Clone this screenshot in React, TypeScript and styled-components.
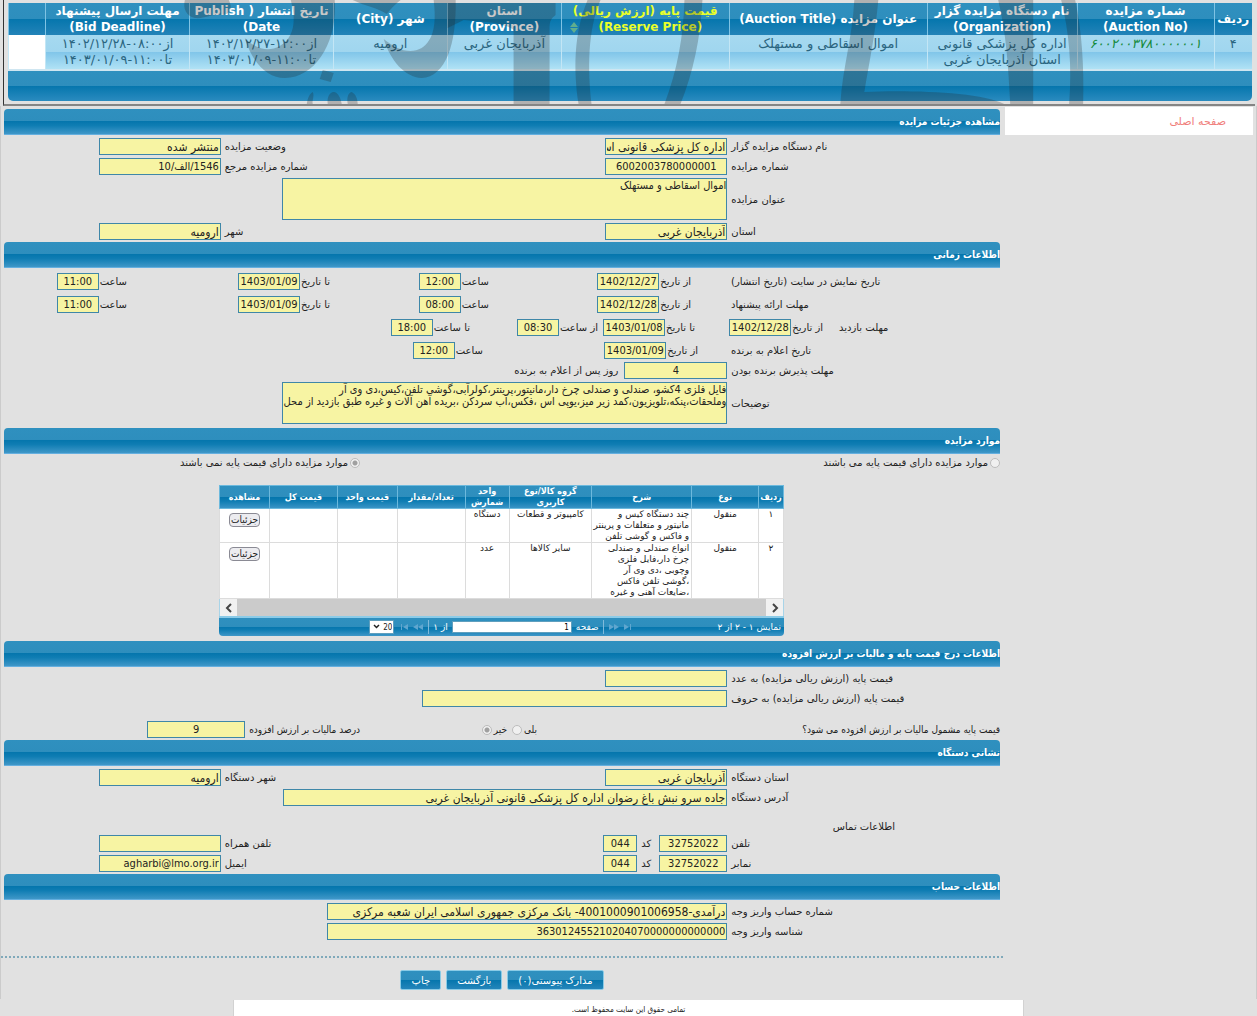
import React, { useId } from "react";
import styled, { createGlobalStyle, css } from "styled-components";

const barFill = "linear-gradient(#2f90bf 0, #2e8ebd 49%, #0576ad 50%, #0f7db3 66%, #3f97c8 100%)";
const wide = `"DejaVu Sans", sans-serif`;
const narrow = `"DejaVu Sans Condensed", "DejaVu Sans", sans-serif`;

const GlobalStyle = createGlobalStyle`
  * { box-sizing: border-box; }
  html, body { margin: 0; background: #e1e1e1; }
  input, textarea, button, select { font-family: ${narrow}; }
  body { font-family: ${wide}; font-size: 10px; line-height: 17px; color: #222; }
`;

const Page = styled.div`
  direction: rtl;
  min-height: 100vh;
  display: flex;
  flex-direction: column;
`;

/* ---------- result list at the top ---------- */

const ResultFrame = styled.header`
  position: relative;
  margin-inline: 2px 3px;
  padding: 3px 3px 3px 4px;
  border-left: 1px solid #333;
  border-bottom: 2px solid #858585;
  overflow: hidden;
`;

const ResultTable = styled.table`
  width: 100%;
  table-layout: fixed;
  border-collapse: collapse;
  line-height: 16px;
  text-align: center;
`;

const ResultHead = styled.th<{ $sorted?: boolean }>`
  height: 32px;
  padding: 0;
  font-size: 12px;
  font-weight: bold;
  color: ${(p) => (p.$sorted ? "#e9ff2a" : "#fff")};
  border-left: 1px solid #7fc3e4;
  white-space: nowrap;
`;

const ResultHeadRow = styled.tr`
  background: linear-gradient(#2f90bf 0, #2e8ebd 49%, #0576ad 50%, #2383b8 100%);
`;

const ResultCell = styled.td<{ $blank?: boolean }>`
  height: 34px;
  padding: 1px 0;
  vertical-align: top;
  font-size: 13px;
  color: #2a6580;
  white-space: nowrap;
  border-left: 1px solid #c3e6f5;
  ${(p) => p.$blank && css`background: #fff;`}
`;

const ResultRow = styled.tr`
  background: linear-gradient(#a6d9f0 0, #a0d6ef 49%, #80c5e9 50%, #b0e2f5 100%);
`;

const ResultLink = styled.a`
  color: #168a3c;
  font-style: italic;
  text-decoration: none;
`;

const SortLine = styled.span`
  display: flex;
  justify-content: center;
  align-items: center;
  gap: 20px;
  padding-inline-start: 18px;
`;

const ResultFoot = styled.div`
  height: 32px;
  border-top: 2px solid #cfe6f1;
  border-radius: 0 0 5px 5px;
  background: linear-gradient(#2f90bf 0, #2e8ebd 49%, #0576ad 50%, #2b8bbf 100%);
`;

const Watermark = styled.svg`
  position: absolute;
  inset: 0;
  width: 100%;
  height: 100%;
  pointer-events: none;
`;

/* ---------- body frame ---------- */

const Frame = styled.div`
  display: flex;
  gap: 5px;
  padding: 1px 3px 0;
  margin-bottom: 1px;
  border-inline: 1px solid #cbcbcb;
`;

const Aside = styled.aside`
  flex: 0 0 248px;
`;

const Crumb = styled.nav`
  height: 28px;
  padding: 6px 27px;
  background: #fff;
  font-size: 11px;
`;

const CrumbLink = styled.a`
  color: #f0807c;
  text-decoration: none;
`;

const Main = styled.main`
  flex: 1;
  min-width: 0;
  padding-top: 2px;
`;

const Bar = styled.h2`
  margin: 0;
  height: 26px;
  line-height: 26px;
  font-family: ${narrow};
  font-size: 10px;
  font-weight: bold;
  color: #fff;
  background: ${barFill};
  border-bottom: 1px solid #64afdf;
  border-radius: 4px 4px 0 0;
`;

const Stack = styled.div<{ $pad?: string; $gap?: number }>`
  display: flex;
  flex-direction: column;
  gap: ${(p) => p.$gap ?? 3}px;
  padding: ${(p) => p.$pad ?? "3px 0 2px"};
`;

const Row = styled.div`
  display: grid;
  grid-template-columns: 269fr 503fr 217fr;
  column-gap: 4px;
  align-items: center;
  min-height: 17px;
`;

const TimeRow = styled.div<{ $cols: string }>`
  display: grid;
  grid-template-columns: ${(p) => p.$cols};
  align-items: center;
  height: 17px;
`;

const Cell = styled.div<{ $start?: number; $gap?: number }>`
  grid-column-start: ${(p) => p.$start ?? "auto"};
  display: flex;
  align-items: center;
  gap: ${(p) => p.$gap ?? 1}px;
  min-width: 0;
`;

const Label = styled.label<{ $end?: boolean; $push?: boolean }>`
  white-space: nowrap;
  ${(p) => p.$end && css`text-align: end;`}
  ${(p) => p.$push && css`margin-inline-start: auto;`}
`;

const fieldLook = css`
  margin: 0;
  border: 1px solid #3f87a8;
  border-radius: 0;
  background: #f7f4a3;
  color: #222;
  outline: none;
`;

const Input = styled.input<{ $w: number; $center?: boolean }>`
  ${fieldLook}
  flex: none;
  width: ${(p) => p.$w}px;
  height: 17px;
  padding: 0 1px;
  font-size: ${(p) => (/^[\u0600-\u06ff]/.test(String(p.defaultValue)) ? 12 : 11)}px;
  text-align: ${(p) => (p.$center ? "center" : "start")};
`;

const Area = styled.textarea`
  ${fieldLook}
  display: block;
  width: 445px;
  height: 42px;
  padding: 1px 0;
  font-size: 11px;
  line-height: 12px;
  white-space: pre;
  resize: none;
  overflow: hidden;
`;

const RadioRow = styled.div`
  display: grid;
  grid-template-columns: 640fr 356fr;
  height: 17px;
  align-items: center;
`;

const Choice = styled.label`
  display: flex;
  align-items: center;
  gap: 2px;
  white-space: nowrap;
`;

const Choices = styled.div`
  display: flex;
  gap: 5px;
`;

const Radio = styled.input`
  appearance: none;
  width: 10px;
  height: 10px;
  margin: 0;
  border: 1px solid #bcbcbc;
  border-radius: 50%;
  background: #f0f0f0;
  &:checked {
    background: radial-gradient(circle, #a0a0a0 0 2px, #f0f0f0 3px);
  }
`;

const VatRow = styled.div`
  display: grid;
  grid-template-columns: 463fr 177fr 356fr;
  align-items: center;
  height: 17px;
  margin-top: 11px;
  font-family: ${narrow};
`;

const ContactTitle = styled.h3`
  margin: 0;
  padding-inline-start: 105px;
  height: 14px;
  line-height: 17px;
  font-size: 10px;
  font-weight: normal;
`;

/* ---------- items grid ---------- */

const GridBox = styled.section`
  width: 565px;
  margin: 14px 216px 5px auto;
`;

const ItemTable = styled.table`
  width: 100%;
  table-layout: fixed;
  border-collapse: collapse;
  background: #fff;
  text-align: center;
  font-size: 9px;
  line-height: 11px;
`;

const ItemHead = styled.th`
  height: 23px;
  padding: 0;
  color: #fff;
  font-family: ${narrow};
  font-weight: bold;
  border: 1px solid #6cb9dd;
`;

const ItemHeadRow = styled.tr`
  background: ${barFill};
`;

const ItemCell = styled.td<{ $text?: boolean }>`
  padding: 0 ${(p) => (p.$text ? 2 : 0)}px;
  vertical-align: top;
  border: 1px solid #dcdcdc;
  white-space: nowrap;
  ${(p) => p.$text && css`text-align: start;`}
`;

const DetailButton = styled.button`
  height: 14px;
  margin: 4px 0 0;
  padding: 0 1px;
  border: 1px solid #8a8a94;
  border-radius: 4px;
  background: #ececf0;
  color: #222;
  font-size: 10px;
  line-height: 12px;
`;

const Scroll = styled.div`
  display: flex;
  justify-content: space-between;
  height: 17px;
  background: #cbcbcb;
  border-inline: 1px solid #a8d4e8;
`;

const ScrollButton = styled.button`
  display: grid;
  place-items: center;
  width: 17px;
  padding: 0;
  border: 0;
  background: #f1f1f1;
`;

const Pager = styled.div`
  display: grid;
  grid-template-columns: 1fr auto 1fr;
  align-items: center;
  height: 20px;
  padding: 0 3px;
  border-top: 2px solid #8bcbe8;
  border-radius: 0 0 4px 4px;
  background: ${barFill};
  color: #fff;
  font-size: 9px;
`;

const PagerTools = styled.div`
  display: flex;
  align-items: center;
  gap: 4px;
`;

const PagerSep = styled.span`
  width: 1px;
  height: 14px;
  background: #7fbadb;
`;

const PageInput = styled.input`
  width: 120px;
  height: 12px;
  padding: 0 2px;
  border: 1px solid #5f9fbe;
  background: #fff;
  font-size: 8px;
`;

const PageSize = styled.select`
  direction: ltr;
  appearance: none;
  width: 25px;
  height: 14px;
  padding: 0 1px;
  border: 1px solid #5f9fbe;
  border-radius: 0;
  background: #fff;
  color: #222;
  font-size: 8px;
  text-align: right;
`;

const SizeBox = styled.span`
  position: relative;
  display: flex;
`;

const SizeArrow = styled.svg`
  position: absolute;
  left: 4px;
  top: 4px;
  pointer-events: none;
`;

/* ---------- bottom ---------- */

const Actions = styled.div`
  display: flex;
  justify-content: center;
  gap: 5px;
  margin: 14px -3px 0;
  padding: 12px 0 9px;
  border-top: 2px dotted #7fa9ba;
`;

const ActionButton = styled.button`
  height: 20px;
  padding: 0 10px;
  border: 1px solid #8acbe6;
  border-radius: 2px;
  background: linear-gradient(#2f90bf 0, #2e8ebd 49%, #0576ad 50%, #2485ba 100%);
  color: #fff;
  font-family: ${wide};
  font-size: 10px;
`;

const Footer = styled.footer`
  flex: 1;
  width: 63%;
  min-height: 16px;
  margin: 0 auto;
  padding-top: 1px;
  background: #fff;
  border-inline: 1px solid #d2d2d2;
  text-align: center;
  font-family: ${narrow};
  font-size: 8px;
`;

type FieldProps = {
  label: string;
  value?: string;
  w: number;
  center?: boolean;
};

/* A caption followed by its box inside one cell. */
function Pair({ label, value = "", w, center }: FieldProps) {
  const id = useId();
  return (
    <>
      <Label htmlFor={id}>{label}</Label>
      <Input id={id} $w={w} $center={center} defaultValue={value} readOnly />
    </>
  );
}

const CodeWrap = styled.span`
  display: flex;
  align-items: center;
  gap: 4px;
  padding-inline-start: 4px;
`;

function Code({ value }: { value: string }) {
  return (
    <CodeWrap>
      <Pair label="کد" value={value} w={34} center />
    </CodeWrap>
  );
}

type FormRowProps = {
  label: string;
  value?: string;
  w?: number;
  center?: boolean;
  code?: string;
  second?: { label: string; value?: string };
};

function FormRow({ label, value = "", w = 122, center, code, second }: FormRowProps) {
  const id = useId();
  return (
    <Row>
      <Label htmlFor={id} $end>{label}</Label>
      <Cell $gap={4}>
        <Input id={id} $w={w} $center={center} defaultValue={value} readOnly />
        {code && <Code value={code} />}
        {second && <Label htmlFor={id + "b"} $push>{second.label}</Label>}
      </Cell>
      {second && <Input id={id + "b"} $w={122} defaultValue={second.value ?? ""} readOnly />}
    </Row>
  );
}

function AreaRow({ label, value }: { label: string; value: string }) {
  const id = useId();
  return (
    <Row>
      <Label htmlFor={id} $end>{label}</Label>
      <Area id={id} defaultValue={value} readOnly />
    </Row>
  );
}

const periodCols = "269fr 40fr 202fr 159fr 203fr 123fr";

function PeriodRow({ label, from, at, to, until }: Record<"label" | "from" | "at" | "to" | "until", string>) {
  return (
    <TimeRow $cols={periodCols}>
      <Label as="span" $end>{label}</Label>
      <Cell $start={3}><Pair label="از تاریخ" value={from} w={62} center /></Cell>
      <Cell><Pair label="ساعت" value={at} w={42} center /></Cell>
      <Cell><Pair label="تا تاریخ" value={to} w={62} center /></Cell>
      <Cell><Pair label="ساعت" value={until} w={42} center /></Cell>
    </TimeRow>
  );
}

function Chevron({ left }: { left?: boolean }) {
  return (
    <svg width="8" height="10" viewBox="0 0 8 10" fill="none" stroke="#444" strokeWidth="2">
      <path d={left ? "M6 1 2 5l4 4" : "M2 1l4 4-4 4"} />
    </svg>
  );
}

function Skip({ end, left }: { end?: boolean; left?: boolean }) {
  return (
    <svg width="11" height="6" viewBox="0 0 11 6" fill="#5fa6cf" transform={left ? "scale(-1 1)" : undefined}>
      <path d="M1 0l5 3-5 3z" />
      {end ? <path d="M7 0h1v6H7z" /> : <path d="M6 0l5 3-5 3z" />}
    </svg>
  );
}

const resultCols = [38, 137, 150, 198, 168, 114, 114, 144, 144, 37];
const itemCols = [25, 67, 100, 83, 44, 68, 60, 68, 50];

function Cols({ sizes }: { sizes: number[] }) {
  const total = sizes.reduce((a, b) => a + b, 0);
  return (
    <colgroup>
      {sizes.map((s, i) => (
        <col key={i} style={{ width: `${(s / total) * 100}%` }} />
      ))}
    </colgroup>
  );
}

const items = [
  {
    no: "۱",
    kind: "منقول",
    text: ["چند دستگاه کیس و", "مانیتور و متعلقات و پرینتر", "و فاکس و گوشی تلفن"],
    group: "کامپیوتر و قطعات",
    unit: "دستگاه",
  },
  {
    no: "۲",
    kind: "منقول",
    text: ["انواع صندلی و صندلی", "چرخ دار،فایل فلزی", "وچوبی ،دی وی آر", "،گوشی تلفن فاکس", "،ضایعات آهنی و غیره"],
    group: "سایر کالاها",
    unit: "عدد",
  },
];

export default function App() {
  return (
    <Page dir="rtl" lang="fa">
      <GlobalStyle />
      <ResultFrame>
        <ResultTable>
          <Cols sizes={resultCols} />
          <thead>
            <ResultHeadRow>
              <ResultHead>ردیف</ResultHead>
              <ResultHead>شماره مزایده<br />(Auction No)</ResultHead>
              <ResultHead>نام دستگاه مزایده گزار<br />(Organization)</ResultHead>
              <ResultHead>عنوان مزایده (Auction Title)</ResultHead>
              <ResultHead $sorted>
                قیمت پایه (ارزش ریالی)
                <SortLine>
                  (Reserve Price)
                  <svg width="8" height="11" viewBox="0 0 8 11" fill="#5fae8e">
                    <path d="M4 0l4 5H0zM0 6h8l-4 5z" />
                  </svg>
                </SortLine>
              </ResultHead>
              <ResultHead>استان<br />(Province)</ResultHead>
              <ResultHead>شهر (City)</ResultHead>
              <ResultHead>تاریخ انتشار ( Publish<br />Date)</ResultHead>
              <ResultHead>مهلت ارسال پیشنهاد<br />(Bid Deadline)</ResultHead>
              <ResultHead />
            </ResultHeadRow>
          </thead>
          <tbody>
            <ResultRow>
              <ResultCell>۴</ResultCell>
              <ResultCell><ResultLink href="#auction">۶۰۰۲۰۰۳۷۸۰۰۰۰۰۰۱</ResultLink></ResultCell>
              <ResultCell>اداره کل پزشکی قانونی<br />استان آذربایجان غربی</ResultCell>
              <ResultCell>اموال اسقاطی و مستهلک</ResultCell>
              <ResultCell />
              <ResultCell>آذربایجان غربی</ResultCell>
              <ResultCell>ارومیه</ResultCell>
              <ResultCell>از۱۲:۰۰-۱۴۰۲/۱۲/۲۷<br />تا۱۱:۰۰-۱۴۰۳/۰۱/۰۹</ResultCell>
              <ResultCell>از۰۸:۰۰-۱۴۰۲/۱۲/۲۸<br />تا۱۱:۰۰-۱۴۰۳/۰۱/۰۹</ResultCell>
              <ResultCell $blank />
            </ResultRow>
          </tbody>
        </ResultTable>
        <ResultFoot />
        <Watermark viewBox="3 0 1252 104" preserveAspectRatio="none" aria-hidden="true">
          <g fill="#222" fillOpacity=".25">
            <path d="M184 0h44c4 8 2 15-8 15-10-1-16 4-26 3-9-2-12-10-10-18z" />
            <path d="M290 0h44c3 40-18 78-50 78-17 0-32-14-40-40 12 12 24 14 35 8 14-8 17-24 11-46z" />
            <path d="M322 70l11 3-3 9-11-3z" />
            <path d="M306 104c1-7 3-10 6-12 2 4-1 9 0 12zM327 104c-1-7 2-12 6-12s7 6 8 12zM347 104c-1-6 0-11 4-12 4 2 6 7 6 12z" />
            <path d="M352 0h48c-8 6-12 12-14 14-8-6-22-8-34-14z" />
            <path d="M433 0h22c1 44-10 77-34 78-17-1-31-17-38-39 12 10 26 16 38 9 12-8 15-24 12-48z" />
            <path d="M447 3h108v12c-4 3-6 6-6 12v77h-36V30c-7-6-22-8-50-10l-16 8z" />
            <path d="M587 0h13c-13 30-13 70-9 104h-13c-5-34-5-70 9-104z" />
            <path d="M684 0h18c-2 38-9 72-22 104h-16c13-34 19-68 20-104z" />
            <path d="M854 0h24c-3 34-9 62-14 92 46-2 116 0 140 12H840c2-35 12-66 14-104z" />
            <path d="M998 0h35v104h-23c-2-40-4-70-12-104z" />
            <path d="M1061 0h14c7 32 9 68 8 104h-14c3-38 0-72-8-104z" />
          </g>
        </Watermark>
      </ResultFrame>

      <Frame>
        <Aside>
          <Crumb><CrumbLink href="#home">صفحه اصلی</CrumbLink></Crumb>
        </Aside>
        <Main>
          <Bar>مشاهده جزئیات مزایده</Bar>
          <Stack>
            <FormRow label="نام دستگاه مزایده گزار" value="اداره کل پزشکی قانونی اس" second={{ label: "وضعیت مزایده", value: "منتشر شده" }} />
            <FormRow label="شماره مزایده" value="6002003780000001" center second={{ label: "شماره مزایده مرجع", value: "1546/الف/10" }} />
            <AreaRow label="عنوان مزایده" value="اموال اسقاطی و مستهلک" />
            <FormRow label="استان" value="آذربایجان غربی" second={{ label: "شهر", value: "ارومیه" }} />
          </Stack>

          <Bar>اطلاعات زمانی</Bar>
          <Stack $pad="5px 0 3px" $gap={6}>
            <PeriodRow label="تاریخ نمایش در سایت (تاریخ انتشار)" from="1402/12/27" at="12:00" to="1403/01/09" until="11:00" />
            <PeriodRow label="مهلت ارائه پیشنهاد" from="1402/12/28" at="08:00" to="1403/01/09" until="11:00" />
            <TimeRow $cols="161fr 16fr 128fr 97fr 128fr 466fr">
              <Label as="span" $end>مهلت بازدید</Label>
              <Cell $start={3}><Pair label="از تاریخ" value="1402/12/28" w={62} center /></Cell>
              <Cell><Pair label="تا تاریخ" value="1403/01/08" w={62} center /></Cell>
              <Cell><Pair label="از ساعت" value="08:30" w={42} center /></Cell>
              <Cell><Pair label="تا ساعت" value="18:00" w={42} center /></Cell>
            </TimeRow>
            <TimeRow $cols="269fr 33fr 215fr 479fr">
              <Label as="span" $end>تاریخ اعلام به برنده</Label>
              <Cell $start={3}><Pair label="از تاریخ" value="1403/01/09" w={62} center /></Cell>
              <Cell><Pair label="ساعت" value="12:00" w={42} center /></Cell>
            </TimeRow>
          </Stack>
          <Stack $pad="0 0 4px">
            <Row>
              <Label htmlFor="accept-days" $end>مهلت پذیرش برنده بودن</Label>
              <Cell $gap={6}>
                <Input id="accept-days" $w={103} $center defaultValue="4" readOnly />
                <span>روز پس از اعلام به برنده</span>
              </Cell>
            </Row>
            <AreaRow
              label="توضیحات"
              value={"فایل فلزی 4کشو، صندلی و صندلی چرخ دار،مانیتور،پرینتر،کولرآبی،گوشی تلفن،کیس،دی وی آر\nوملحقات،پنکه،تلویزیون،کمد زیر میز،یوپی اس ،فکس،آب سردکن ،بریده آهن آلات و غیره طبق بازدید از محل"}
            />
          </Stack>

          <Bar>موارد مزایده</Bar>
          <RadioRow>
            <Choice><Radio type="radio" name="base" disabled />موارد مزایده دارای قیمت پایه می باشند</Choice>
            <Choice><Radio type="radio" name="base" defaultChecked disabled />موارد مزایده دارای قیمت پایه نمی باشند</Choice>
          </RadioRow>
          <GridBox>
            <ItemTable>
              <Cols sizes={itemCols} />
              <thead>
                <ItemHeadRow>
                  <ItemHead>ردیف</ItemHead>
                  <ItemHead>نوع</ItemHead>
                  <ItemHead>شرح</ItemHead>
                  <ItemHead>گروه کالا/نوع<br />کاربری</ItemHead>
                  <ItemHead>واحد<br />شمارش</ItemHead>
                  <ItemHead>تعداد/مقدار</ItemHead>
                  <ItemHead>قیمت واحد</ItemHead>
                  <ItemHead>قیمت کل</ItemHead>
                  <ItemHead>مشاهده</ItemHead>
                </ItemHeadRow>
              </thead>
              <tbody>
                {items.map((it) => (
                  <tr key={it.no}>
                    <ItemCell>{it.no}</ItemCell>
                    <ItemCell>{it.kind}</ItemCell>
                    <ItemCell $text>
                      {it.text.map((line) => <div key={line}>{line}</div>)}
                    </ItemCell>
                    <ItemCell>{it.group}</ItemCell>
                    <ItemCell>{it.unit}</ItemCell>
                    <ItemCell />
                    <ItemCell />
                    <ItemCell />
                    <ItemCell><DetailButton type="button">جزئیات</DetailButton></ItemCell>
                  </tr>
                ))}
              </tbody>
            </ItemTable>
            <Scroll>
              <ScrollButton type="button" aria-label="راست"><Chevron /></ScrollButton>
              <ScrollButton type="button" aria-label="چپ"><Chevron left /></ScrollButton>
            </Scroll>
            <Pager>
              <span>نمایش ۱ - ۲ از ۲</span>
              <PagerTools>
                <Skip end />
                <Skip />
                <PagerSep />
                <label htmlFor="page-no">صفحه</label>
                <PageInput id="page-no" defaultValue="1" />
                <span>از ۱</span>
                <PagerSep />
                <Skip left />
                <Skip end left />
                <SizeBox>
                  <PageSize aria-label="تعداد" defaultValue="20"><option>20</option></PageSize>
                  <SizeArrow width="7" height="5" viewBox="0 0 7 5" fill="none" stroke="#222" strokeWidth="1.5">
                    <path d="M1 1l2.5 2.5L6 1" />
                  </SizeArrow>
                </SizeBox>
              </PagerTools>
            </Pager>
          </GridBox>

          <Bar>اطلاعات درج قیمت پایه و مالیات بر ارزش افزوده</Bar>
          <Stack>
            <FormRow label="قیمت پایه (ارزش ریالی مزایده) به عدد" />
            <FormRow label="قیمت پایه (ارزش ریالی مزایده) به حروف" w={305} />
            <VatRow>
              <span>قیمت پایه مشمول مالیات بر ارزش افزوده می شود؟</span>
              <Choices>
                <Choice>بلی<Radio type="radio" name="vat" disabled /></Choice>
                <Choice>خیر<Radio type="radio" name="vat" defaultChecked disabled /></Choice>
              </Choices>
              <Cell $gap={4}><Pair label="درصد مالیات بر ارزش افزوده" value="9" w={98} center /></Cell>
            </VatRow>
          </Stack>

          <Bar>نشانی دستگاه</Bar>
          <Stack $pad="3px 0 0">
            <FormRow label="استان دستگاه" value="آذربایجان غربی" second={{ label: "شهر دستگاه", value: "ارومیه" }} />
            <FormRow label="آدرس دستگاه" value="جاده سرو نبش باغ رضوان اداره کل پزشکی قانونی آذربایجان غربی" w={444} />
          </Stack>
          <Stack $pad="12px 0 2px">
            <ContactTitle>اطلاعات تماس</ContactTitle>
            <FormRow label="تلفن" value="32752022" w={68} center code="044" second={{ label: "تلفن همراه" }} />
            <FormRow label="نمابر" value="32752022" w={68} center code="044" second={{ label: "ایمیل", value: "agharbi@lmo.org.ir" }} />
          </Stack>

          <Bar>اطلاعات حساب</Bar>
          <Stack>
            <FormRow label="شماره حساب واریز وجه" value="درآمدی-4001000901006958- بانک مرکزی جمهوری اسلامی ایران شعبه مرکزی" w={400} />
            <FormRow label="شناسه واریز وجه" value="363012455210204070000000000000" w={400} />
          </Stack>

          <Actions>
            <ActionButton type="button">مدارک پیوستی(۰)</ActionButton>
            <ActionButton type="button">بازگشت</ActionButton>
            <ActionButton type="button">چاپ</ActionButton>
          </Actions>
        </Main>
      </Frame>
      <Footer>تمامی حقوق این سایت محفوظ است.</Footer>
    </Page>
  );
}
